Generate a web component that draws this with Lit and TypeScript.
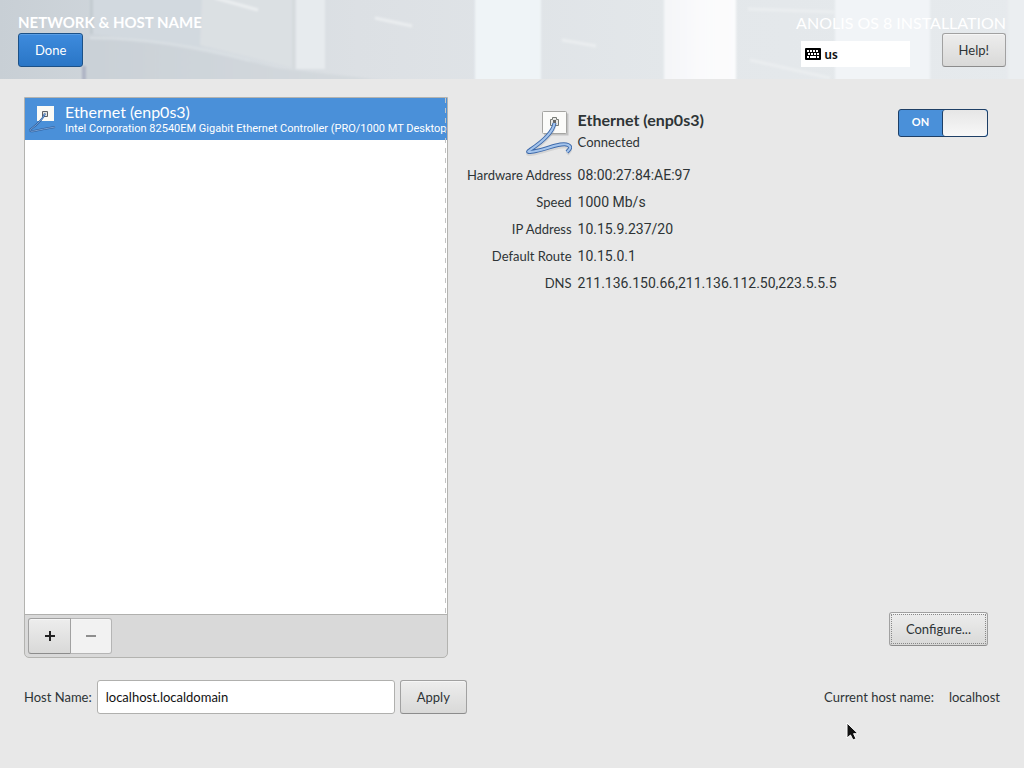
import { LitElement, html, css, svg } from "lit";
import { customElement, state } from "lit/decorators.js";

const cable = "M28.500 12C27 22 16 31 4 39C-1 42 5 41 10 40C24 37 36 31 42 34C46 36 44 38 41 41";
const cableIcon = svg`
  <path d="M18 2.500h24.500v22H18z" fill="#aaa" opacity=".6"/>
  <rect x="16.500" y=".500" width="24" height="22" rx="1" fill="#fbfbf9" stroke="#a5a5a2"/>
  <path d="M24.500 14.500v-6h2v-2h4v2h2v6z" fill="#e9e9e6" stroke="#777a75"/>
  <path d="M27 9h3v3h-3z" fill="#666"/>
  <path d=${cable} transform="translate(0 2)" fill="none" stroke="#999" stroke-width="4" opacity=".25"/>
  <path d=${cable} fill="none" stroke="#3f6bab" stroke-width="4" stroke-linejoin="round"/>
  <path d=${cable} fill="none" stroke="#a4c4ec" stroke-width="2" stroke-linejoin="round"/>`;

const smallIcon = svg`
  <rect x="8" y="1" width="17" height="15" fill="#fbfbf6"/>
  <path d="M13.500 11.500v-5h5v5z" fill="#e4e4de" stroke="#5d6064"/>
  <path d="M16 8.500Q14 15 1.500 24.500Q0 27 5 26Q14 24 26 22" fill="none" stroke="#2f5f9e" stroke-width="2"/>
  <path d="M16 8.500Q14 15 1.500 24.500Q0 27 5 26Q14 24 26 22" fill="none" stroke="#86aee0" stroke-width=".8"/>`;

@customElement("app-root")
export class AppRoot extends LitElement {
  static styles = css`
    :host {
      display: flex;
      flex-direction: column;
      min-height: 100vh;
      background: #e8e8e8;
      color: #2e3436;
      font: 13px/18px Lato, "Noto Sans", sans-serif;
    }
    * { box-sizing: border-box; }
    header {
      display: flex;
      justify-content: space-between;
      position: relative;
      height: 79px;
      padding: 12px 18px;
      color: #fff;
      overflow: hidden;
    }
    .art { position: absolute; inset: 0; width: 100%; height: 100%; }
    .side { position: relative; }
    h1, h2, p { margin: 0; }
    h1 { font-size: 15px; line-height: 21px; font-weight: 700; }
    .product { font-size: 16px; line-height: 21px; text-align: right; }
    button {
      height: 34px;
      padding: 0 16px;
      border: 1px solid #a1a1a1;
      border-bottom-color: #8c8c8c;
      border-radius: 3px;
      background: linear-gradient(#ededed, #d9d9d8);
      box-shadow: inset 0 1px #f6f6f6;
      color: #2e3436;
      font: inherit;
    }
    .done {
      display: block;
      border-color: #1c5187;
      background: linear-gradient(#3e8bdd, #2a76c6);
      box-shadow: inset 0 1px #5a9ee5;
      color: #fff;
    }
    .tools { display: flex; justify-content: flex-end; align-items: flex-end; gap: 32px; }
    .layout {
      display: flex;
      align-items: center;
      gap: 4px;
      width: 109px;
      height: 26px;
      padding: 0 4px;
      background: #fff;
      color: #111;
      font-weight: 700;
    }
    main { flex: 1; display: flex; flex-direction: column; padding: 18px 24px 54px; }
    .panes { flex: 1; display: flex; gap: 18px; }
    .devices {
      flex: 0 0 43.400%;
      min-width: 0;
      display: flex;
      flex-direction: column;
      border: 1px solid #b3b3b0;
      border-radius: 0 0 5px 5px;
      overflow: hidden;
      background: #d9d9d9;
    }
    .list { flex: 1; background: #fff; border-bottom: 1px solid #b0b0ae; position: relative; }
    .list::after {
      content: "";
      position: absolute;
      inset: 0 1px 0 auto;
      width: 1px;
      background: repeating-linear-gradient(#c4c4c4 0 5px, transparent 5px 10px);
    }
    .device {
      display: flex;
      align-items: center;
      gap: 8px;
      height: 42px;
      padding-left: 4px;
      background: #4a90d9;
      color: #fff;
    }
    .device svg { flex: none; }
    .names { min-width: 0; white-space: nowrap; }
    .names strong { display: block; font-size: 16px; line-height: 19px; font-weight: 400; }
    .names small { display: block; font-family: Roboto, sans-serif; font-size: 11px; line-height: 15px; }
    .bar { display: flex; height: 42px; padding: 3px; }
    .bar button { display: grid; place-items: center; width: 43px; height: 36px; padding: 0; }
    .bar button:first-child { border-radius: 3px 0 0 3px; }
    .bar button:last-child { width: 41px; border-left: 0; border-radius: 0 3px 3px 0; background: #f2f2f2; border-color: #b5b5b5; }
    .details { flex: 1; min-width: 0; display: flex; flex-direction: column; align-items: flex-start; padding: 12px 12px 12px 0; }
    .heading { display: grid; grid-template-columns: 106px 1fr auto; column-gap: 6px; width: 100%; }
    .heading > svg { justify-self: end; margin-top: 2px; }
    h2 { font-size: 16px; line-height: 22px; font-weight: 700; }
    .heading p { line-height: 22px; }
    .switch { position: relative; display: flex; width: 90px; height: 28px; border: 1px solid #1e3f66; border-radius: 3px; background: #4a90d9; overflow: hidden; }
    .switch input { position: absolute; inset: 0; width: 100%; height: 100%; margin: 0; opacity: 0; }
    .switch span { flex: 1; color: #fff; font-size: 11px; line-height: 24px; font-weight: 700; text-align: center; }
    .switch i { width: 45px; border-left: 1px solid #1e3f66; border-radius: 3px; background: linear-gradient(#e6e6e6, #f8f8f8); }
    dl { display: grid; grid-template-columns: 106px 1fr; gap: 9px 6px; margin: 9px 0 0; }
    dt { text-align: right; white-space: nowrap; }
    dd { margin: 0; font-family: Roboto, sans-serif; font-size: 14px; }
    .configure { margin: auto 0 0; align-self: flex-end; outline: 1px dotted #888; outline-offset: -3px; }
    .host { display: flex; align-items: center; gap: 5px; margin-top: 22px; }
    .host input {
      width: 298px;
      height: 34px;
      padding: 0 8px;
      border: 1px solid #b0b0ae;
      border-radius: 3px;
      background: #fff;
      color: #111;
      font: inherit;
    }
    .current { margin-left: auto; display: flex; gap: 15px; }
    .cursor { position: absolute; left: 846px; top: 722px; pointer-events: none; }
  `;

  @state() private on = true;

  private rows = [
    ["Hardware Address", "08:00:27:84:AE:97"],
    ["Speed", "1000 Mb/s"],
    ["IP Address", "10.15.9.237/20"],
    ["Default Route", "10.15.0.1"],
    ["DNS", "211.136.150.66,211.136.112.50,223.5.5.5"],
  ];

  render() {
    return html`
      <header>
        <svg class="art" viewBox="0 0 1024 79" preserveAspectRatio="none" aria-hidden="true">
          <defs>
            <linearGradient id="base"><stop stop-color="#c8cfd5"/><stop offset=".2" stop-color="#d5dbe0"/><stop offset=".35" stop-color="#dce0e4"/><stop offset=".65" stop-color="#e3e7ea"/><stop offset="1" stop-color="#e6eaed"/></linearGradient>
            <linearGradient id="glow"><stop stop-color="#f4f6f8"/><stop offset=".5" stop-color="#fafafc"/><stop offset="1" stop-color="#fbfcfd"/></linearGradient>
            <linearGradient id="shade" x2="1"><stop stop-color="#cad1d7"/><stop offset="1" stop-color="#d6dbdf"/></linearGradient>
            <filter id="soft"><feGaussianBlur stdDeviation="1.200"/></filter>
          </defs>
          <rect width="1024" height="79" fill="url(#base)"/>
          <g filter="url(#soft)">
            <path d="M92 -3h110v50L92 34z" fill="#d2d9df"/>
            <path d="M90 -3h3v37h-3z" fill="#c2cad0"/>
            <path d="M202 -3h90v70l-92-22z" fill="#dbe0e3"/>
            <path d="M84 39Q160 38 276 68L400 82H84z" fill="url(#shade)"/>
            <path d="M90 38Q170 38 250 61" fill="none" stroke="#dae0e4" stroke-width="2"/>
            <path d="M215 -2L258 10M375 18L412 26M562 40L596 46M748 9L834 12M750 60L830 78" fill="none" stroke="#ebeef0" stroke-width="3"/>
            <path d="M292 -3h3v74h-3z" fill="#d5dade"/>
            <path d="M296 -3h29v72h-29z" fill="#e7ebee"/>
            <path d="M475 -3h66v84h-66z" fill="#eff4f7"/>
            <path d="M664 -3h72v84h-72z" fill="url(#glow)"/>
            <path d="M835 -3h95v84h-95z" fill="#f1f4f7"/>
            <path d="M1008 -3h18v84h-18z" fill="#ebeef1"/>
            <path d="M82 66h4v15h-4z" fill="#aeb4c4"/>
          </g>
        </svg>
        <div class="side">
          <h1>NETWORK &amp; HOST NAME</h1>
          <button class="done">Done</button>
        </div>
        <div class="side">
          <p class="product">ANOLIS OS 8 INSTALLATION</p>
          <div class="tools">
            <div class="layout">
              <svg width="16" height="12" viewBox="0 0 16 12" aria-hidden="true">
                <rect width="16" height="12" rx="1"/>
                <path d="M2 3h12M3 6h11" stroke="#fff" stroke-width="1.800" stroke-dasharray="2 1"/>
                <path d="M2 9h2M5 9h6M12 9h2" stroke="#fff" stroke-width="1.800"/>
              </svg>
              <span>us</span>
            </div>
            <button>Help!</button>
          </div>
        </div>
      </header>
      <main>
        <div class="panes">
          <section class="devices" aria-label="Devices">
            <div class="list">
              <div class="device">
                <svg width="28" height="28" viewBox="0 0 28 28" aria-hidden="true">${smallIcon}</svg>
                <div class="names">
                  <strong>Ethernet (enp0s3)</strong>
                  <small>Intel Corporation 82540EM Gigabit Ethernet Controller (PRO/1000 MT Desktop</small>
                </div>
              </div>
            </div>
            <div class="bar">
              <button aria-label="Add"><svg width="10" height="10"><path d="M5 0v10M0 5h10" stroke="#222" stroke-width="2"/></svg></button>
              <button aria-label="Remove" disabled><svg width="10" height="10"><path d="M0 5h10" stroke="#8e8e8e" stroke-width="2"/></svg></button>
            </div>
          </section>
          <section class="details">
            <div class="heading">
              <svg width="46" height="46" viewBox="0 0 46 46" aria-hidden="true">${cableIcon}</svg>
              <div><h2>Ethernet (enp0s3)</h2><p>Connected</p></div>
              <label class="switch">
                <input type="checkbox" aria-label="Connection" .checked=${this.on} @change=${() => (this.on = !this.on)} />
                <span>${this.on ? "ON" : "OFF"}</span><i></i>
              </label>
            </div>
            <dl>${this.rows.map(([k, v]) => html`<dt>${k}</dt><dd>${v}</dd>`)}</dl>
            <button class="configure">Configure...</button>
          </section>
        </div>
        <form class="host" @submit=${(e: Event) => e.preventDefault()}>
          <label for="host">Host Name:</label>
          <input id="host" type="text" value="localhost.localdomain" />
          <button type="submit">Apply</button>
          <div class="current"><span>Current host name:</span><span>localhost</span></div>
        </form>
      </main>
      <svg class="cursor" width="14" height="20" viewBox="0 0 14 20" aria-hidden="true">
        <path d="M1 1v15l3.500-3 2.500 5 3-1.300-2.400-5H12z" fill="#111" stroke="#fff"/>
      </svg>
    `;
  }
}
